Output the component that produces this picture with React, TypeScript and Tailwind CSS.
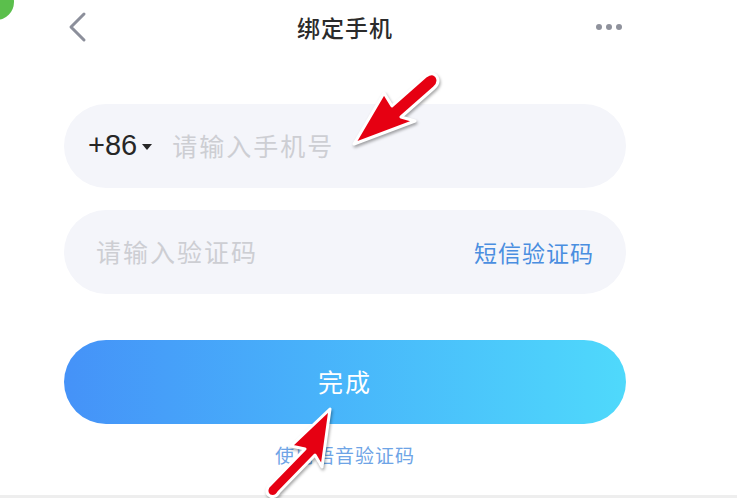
import React from 'react';

// Red annotation arrow drawn over the page
function Arrow({ d }: { d: string }) {
    return (
        <path
            d={d}
            fill="#e60012"
            stroke="#ffffff"
            strokeWidth={3}
            strokeLinejoin="round"
            style={{ filter: 'drop-shadow(1px 2px 1.5px rgba(0,0,0,0.35))' }}
        />
    );
}

export default function App() {
    return (
        <div
            className="relative w-[737px] h-[498px] overflow-hidden bg-white"
            style={{ fontFamily: '"Noto Sans CJK SC", "Noto Sans", sans-serif' }}
        >
            {/* status corner */}
            <div className="absolute -left-[22px] -top-[16px] w-[36px] h-[36px] rounded-full bg-[#5bbf4c]" />

            {/* header */}
            <div className="flex items-center justify-between h-[54px] pl-[66px] pr-[115px]">
                <svg width="24" height="32" viewBox="0 0 24 32">
                    <path d="M18 3 L5 16 L18 29" fill="none" stroke="#8c8f9b" strokeWidth="3" strokeLinecap="round" strokeLinejoin="round" />
                </svg>
                <div className="text-[23px] font-medium text-[#2b2b2b] tracking-[1px] ml-[4px]">绑定手机</div>
                <div className="flex gap-[4px]">
                    <span className="w-[6px] h-[6px] rounded-full bg-[#8f929c]" />
                    <span className="w-[6px] h-[6px] rounded-full bg-[#8f929c]" />
                    <span className="w-[6px] h-[6px] rounded-full bg-[#8f929c]" />
                </div>
            </div>

            {/* form */}
            <div className="flex flex-col px-[64px] w-[690px] mt-[50px]">
                <div className="flex items-center h-[84px] rounded-full bg-[#f4f5fa] pl-[24px]">
                    <span className="text-[29px] text-[#262626]" style={{ fontFamily: '"Liberation Sans", Arial, sans-serif' }}>+86</span>
                    <span className="ml-[5px] mt-[2px] w-0 h-0 border-l-[5px] border-r-[5px] border-t-[6px] border-l-transparent border-r-transparent border-t-[#262626]" />
                    <span className="ml-[20px] text-[25px] tracking-[2px] text-[#cdced3]">请输入手机号</span>
                </div>

                <div className="flex items-center justify-between h-[84px] rounded-full bg-[#f4f5fa] pl-[32px] pr-[32px] mt-[22px]">
                    <span className="text-[25px] tracking-[2px] text-[#cdced3]">请输入验证码</span>
                    <span className="text-[23px] tracking-[1px] text-[#4a8ee0]">短信验证码</span>
                </div>

                <button className="flex items-center justify-center h-[84px] rounded-full mt-[46px] bg-gradient-to-r from-[#4592f8] to-[#4fd9fb] text-white text-[25px] tracking-[2px]">
                    完成
                </button>

                <div className="flex justify-center mt-[17px] text-[19px] tracking-[1px] text-[#6ea4e6]">使用语音验证码</div>
            </div>

            {/* bottom edge */}
            <div className="absolute left-0 bottom-0 w-full h-[3px] bg-[#eeeeee]" />

            {/* annotation arrows */}
            <svg className="absolute left-0 top-0" width="737" height="498" viewBox="0 0 737 498">
                <Arrow d="M354 144 L384 93 L392 106 L426 76 Q433 71 437 77 Q440 83 434 88 L401 117 L415 121 Z" />
                <Arrow d="M330 409 L291 446 L305 449 L268 487 Q265 493 270 496 Q276 498 279 492 L315 455 L322 467 Z" />
            </svg>
        </div>
    );
}
